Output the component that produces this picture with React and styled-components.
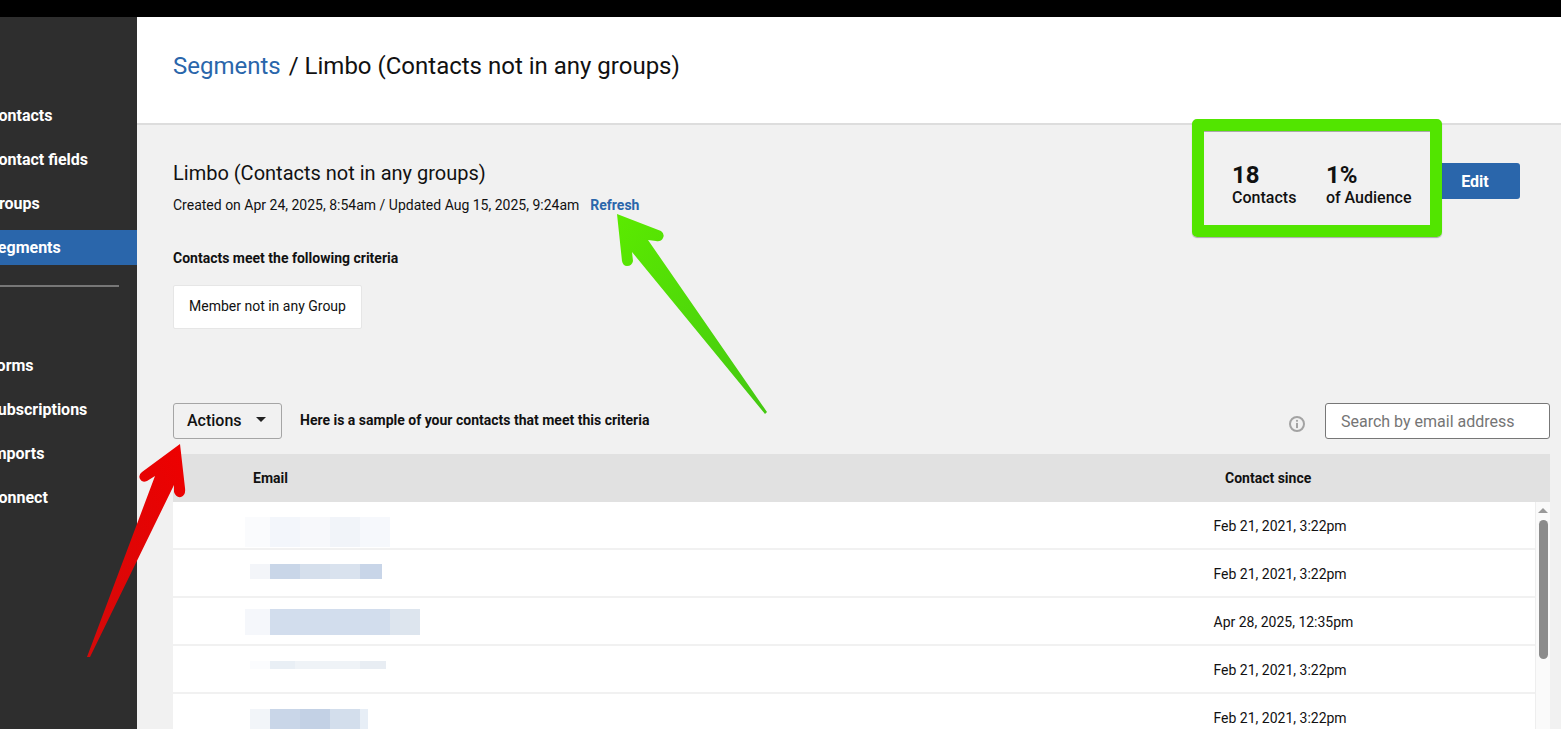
import React from "react";
import styled, { createGlobalStyle } from "styled-components";

const GlobalStyle = createGlobalStyle`
    html, body {
        margin: 0;
        height: 100%;
        overflow: hidden;
        font-family: Roboto, "Liberation Sans", sans-serif;
        color: #111;
    }
    * { box-sizing: border-box; }
`
const Page = styled.div`
    position: relative;
    width: 1561px;
    height: 729px;
    overflow: hidden;
    display: flex;
    flex-direction: column;
    background-color: #000;
    padding-top: 17px;
`
const Shell = styled.div`
    flex: 1;
    display: flex;
    min-height: 0;
`
const Sidebar = styled.nav`
    width: 137px;
    flex-shrink: 0;
    background-color: #2e2e2e;
    overflow: hidden;
    padding-top: 81px;
`
const NavGroup = styled.div`
    display: flex;
    flex-direction: column;
    gap: 9px;
`
const NavItem = styled.div`
    height: 35px;
    display: flex;
    align-items: center;
    font-size: 16px;
    font-weight: 700;
    color: #fff;
    background-color: ${(p) => (p.$active ? "#2a66ab" : "transparent")};
`
const NavLabel = styled.span`
    margin-left: -12px;
    white-space: nowrap;
`
const NavDivider = styled.hr`
    width: 119px;
    height: 2px;
    margin: 20px 0 61px;
    border: 0;
    background-color: #777;
`
const Main = styled.main`
    flex: 1;
    min-width: 0;
    display: flex;
    flex-direction: column;
    background-color: #f1f1f1;
`
const Header = styled.header`
    height: 108px;
    flex-shrink: 0;
    display: flex;
    padding: 33px 36px 0;
    background-color: #fff;
    border-bottom: 2px solid #ddd;
`
const Breadcrumb = styled.h1`
    margin: 0;
    font-size: 24px;
    line-height: 32px;
    font-weight: 400;
`
const CrumbLink = styled.a`
    color: #2a66ab;
    margin-right: 8px;
`
const Content = styled.div`
    flex: 1;
    min-height: 0;
    display: flex;
    flex-direction: column;
    padding: 36px 11px 0 36px;
`
const TopRow = styled.section`
    display: flex;
    justify-content: space-between;
    align-items: flex-start;
    padding-right: 30px;
    height: 242px;
`
const Info = styled.div`
    display: flex;
    flex-direction: column;
    align-items: flex-start;
`
const SegmentName = styled.h2`
    margin: 0;
    font-size: 20px;
    line-height: 24px;
    font-weight: 400;
`
const Meta = styled.p`
    margin: 11px 0 0;
    font-size: 14px;
    line-height: 18px;
`
const Refresh = styled.a`
    margin-left: 11px;
    font-weight: 700;
    color: #2a66ab;
`
const CriteriaTitle = styled.h3`
    margin: 35px 0 0;
    font-size: 14px;
    line-height: 18px;
    font-weight: 700;
`
const CriteriaBox = styled.div`
    margin-top: 18px;
    height: 44px;
    padding: 0 15px 2px;
    display: flex;
    align-items: center;
    font-size: 14px;
    background-color: #fff;
    border: 1px solid #e6e6e6;
    border-radius: 2px;
`
const Summary = styled.div`
    display: flex;
    align-items: flex-start;
`
const Stats = styled.div`
    position: relative;
    display: flex;
    gap: 29.5px;
    padding: 0 30.5px 0 0;
`
const Stat = styled.div`
    display: flex;
    flex-direction: column;
`
const StatValue = styled.span`
    font-size: 24px;
    line-height: 28px;
    font-weight: 700;
`
const StatLabel = styled.span`
    font-size: 16px;
    line-height: 18px;
    font-weight: 500;
`
const Highlight = styled.div`
    position: absolute;
    top: -42px;
    left: -40px;
    width: 250px;
    height: 118px;
    border: 12px solid #52e500;
    border-radius: 5px;
    box-shadow: 0 1px 1px rgba(0, 0, 0, 0.3), inset 0 1px 0 rgba(0, 0, 0, 0.3);
`
const EditButton = styled.button`
    width: 78px;
    height: 36px;
    margin-top: 2px;
    padding: 0 12px 0 0;
    border: 0;
    border-radius: 0 3px 3px 0;
    background-color: #2a66ab;
    color: #fff;
    font-family: inherit;
    font-size: 16px;
    font-weight: 700;
`
const Toolbar = styled.div`
    height: 36px;
    display: flex;
    align-items: center;
    flex-shrink: 0;
`
const ActionsButton = styled.button`
    width: 109px;
    height: 36px;
    display: flex;
    align-items: center;
    gap: 14px;
    padding: 0 0 2px 13px;
    background-color: #f1f1f1;
    border: 1px solid #a5a5a5;
    border-radius: 3px;
    color: #111;
    font-family: inherit;
    font-size: 16px;
    font-weight: 500;
`
const Caret = styled.span`
    width: 0;
    height: 0;
    margin-bottom: 2px;
    border-left: 5px solid transparent;
    border-right: 5px solid transparent;
    border-top: 5px solid #222;
`
const SampleText = styled.span`
    margin: 0 0 2px 18px;
    font-size: 14px;
    font-weight: 700;
`
const InfoIcon = styled.svg`
    margin: 6px 19px 0 auto;
    width: 18px;
    height: 18px;
`
const SearchInput = styled.input`
    width: 225px;
    height: 36px;
    padding: 0 15px;
    background-color: #fff;
    border: 1px solid #777;
    border-radius: 3px;
    font-family: inherit;
    font-size: 16px;
    outline: none;
    &::placeholder { color: #757575; opacity: 1; }
`
const TableHead = styled.div`
    margin-top: 15px;
    height: 48px;
    flex-shrink: 0;
    display: flex;
    align-items: center;
    background-color: #e1e1e1;
    font-size: 14px;
    font-weight: 700;
`
const HeadEmail = styled.span`
    margin-left: 80px;
`
const HeadSince = styled.span`
    margin-left: auto;
    width: 325px;
`
const TableBody = styled.div`
    flex: 1;
    min-height: 0;
    display: flex;
    overflow: hidden;
`
const Rows = styled.div`
    flex: 1;
    min-width: 0;
`
const Row = styled.div`
    height: 48px;
    display: flex;
    align-items: center;
    background-color: #fff;
    border-bottom: 2px solid #f1f1f1;
    font-size: 14px;
`
const EmailCell = styled.div`
    width: 1040.5px;
    align-self: stretch;
    flex-shrink: 0;
    display: flex;
    align-items: flex-start;
    padding-left: ${(p) => p.$inset}px;
`
const Since = styled.span`
    padding-top: 2px;
    white-space: nowrap;
`
const Pixel = styled.span`
    width: ${(p) => p.$w}px;
    height: ${(p) => p.$h}px;
    margin-top: ${(p) => p.$top}px;
    background-color: ${(p) => p.$color};
`
const Scrollbar = styled.div`
    width: 15px;
    flex-shrink: 0;
    display: flex;
    flex-direction: column;
    align-items: center;
    background-color: #fafafa;
    border-left: 1px solid #eee;
`
const ScrollArrow = styled.span`
    width: 0;
    height: 0;
    margin-top: 6px;
    border-left: 5px solid transparent;
    border-right: 5px solid transparent;
    border-bottom: 5px solid #999;
`
const ScrollThumb = styled.span`
    width: 9px;
    height: 139px;
    margin-top: 7px;
    border-radius: 5px;
    background-color: #8c8c8c;
`
const ArrowOverlay = styled.svg`
    position: absolute;
    top: 0;
    left: 0;
    width: 1561px;
    height: 729px;
    pointer-events: none;
`

const upperNav = ["Contacts", "Contact fields", "Groups", "Segments"];
const lowerNav = ["Forms", "Subscriptions", "Imports", "Connect"];

// the addresses are pixelated in the picture, each one is a row of colour blocks
const rows = [
    {
        since: "Feb 21, 2021, 3:22pm", inset: 72, h: 30, top: 15,
        blocks: [[25, "#fafbfd"], [30, "#f3f6fb"], [30, "#f7f8fb"], [30, "#f1f4f9"], [30, "#f6f8fc"]],
    },
    {
        since: "Feb 21, 2021, 3:22pm", inset: 77, h: 15, top: 14,
        blocks: [[20, "#f3f5f9"], [30, "#c9d6e8"], [30, "#d5dfec"], [30, "#d9e2ee"], [22, "#c8d5e8"]],
    },
    {
        since: "Apr 28, 2025, 12:35pm", inset: 72, h: 26, top: 11,
        blocks: [[25, "#f5f7fb"], [120, "#d2dded"], [30, "#dde5ee"]],
    },
    {
        since: "Feb 21, 2021, 3:22pm", inset: 77, h: 8, top: 15,
        blocks: [[20, "#fbfcfe"], [25, "#e9eff5"], [65, "#eff3f7"], [26, "#e8edf3"]],
    },
    {
        since: "Feb 21, 2021, 3:22pm", inset: 77, h: 20, top: 15,
        blocks: [[20, "#f2f5f9"], [30, "#c9d6e8"], [30, "#c3d1e5"], [30, "#d3deec"], [8, "#e7eef6"]],
    },
];

const App = () => {
    return (
        <Page>
            <GlobalStyle />
            <Shell>
                <Sidebar>
                    <NavGroup>
                        {upperNav.map((item) => (
                            <NavItem key={item} $active={item === "Segments"}>
                                <NavLabel>{item}</NavLabel>
                            </NavItem>
                        ))}
                    </NavGroup>
                    <NavDivider />
                    <NavGroup>
                        {lowerNav.map((item) => (
                            <NavItem key={item}>
                                <NavLabel>{item}</NavLabel>
                            </NavItem>
                        ))}
                    </NavGroup>
                </Sidebar>
                <Main>
                    <Header>
                        <Breadcrumb>
                            <CrumbLink>Segments</CrumbLink>/ Limbo (Contacts not in any groups)
                        </Breadcrumb>
                    </Header>
                    <Content>
                        <TopRow>
                            <Info>
                                <SegmentName>Limbo (Contacts not in any groups)</SegmentName>
                                <Meta>
                                    Created on Apr 24, 2025, 8:54am / Updated Aug 15, 2025, 9:24am
                                    <Refresh>Refresh</Refresh>
                                </Meta>
                                <CriteriaTitle>Contacts meet the following criteria</CriteriaTitle>
                                <CriteriaBox>Member not in any Group</CriteriaBox>
                            </Info>
                            <Summary>
                                <Stats>
                                    <Stat>
                                        <StatValue>18</StatValue>
                                        <StatLabel>Contacts</StatLabel>
                                    </Stat>
                                    <Stat>
                                        <StatValue>1%</StatValue>
                                        <StatLabel>of Audience</StatLabel>
                                    </Stat>
                                    <Highlight />
                                </Stats>
                                <EditButton>Edit</EditButton>
                            </Summary>
                        </TopRow>
                        <Toolbar>
                            <ActionsButton>
                                Actions
                                <Caret />
                            </ActionsButton>
                            <SampleText>Here is a sample of your contacts that meet this criteria</SampleText>
                            <InfoIcon viewBox="0 0 18 18">
                                <circle cx="9" cy="9" r="7" fill="none" stroke="#a3a3a3" strokeWidth="2" />
                                <circle cx="9" cy="5.8" r="1.1" fill="#a3a3a3" />
                                <rect x="8" y="7.9" width="2" height="5.2" fill="#a3a3a3" />
                            </InfoIcon>
                            <SearchInput placeholder="Search by email address" />
                        </Toolbar>
                        <TableHead>
                            <HeadEmail>Email</HeadEmail>
                            <HeadSince>Contact since</HeadSince>
                        </TableHead>
                        <TableBody>
                            <Rows>
                                {rows.map((row, i) => (
                                    <Row key={i}>
                                        <EmailCell $inset={row.inset}>
                                            {row.blocks.map(([w, color], j) => (
                                                <Pixel key={j} $w={w} $h={row.h} $top={row.top} $color={color} />
                                            ))}
                                        </EmailCell>
                                        <Since>{row.since}</Since>
                                    </Row>
                                ))}
                            </Rows>
                            <Scrollbar>
                                <ScrollArrow />
                                <ScrollThumb />
                            </Scrollbar>
                        </TableBody>
                    </Content>
                </Main>
            </Shell>
            <ArrowOverlay viewBox="0 0 1561 729">
                <defs>
                    <linearGradient id="greenFill" x1="0" y1="0" x2="1" y2="1">
                        <stop offset="0" stopColor="#5bea00" />
                        <stop offset="1" stopColor="#44c812" />
                    </linearGradient>
                    <linearGradient id="redFill" x1="1" y1="0" x2="0" y2="1">
                        <stop offset="0" stopColor="#ee0000" />
                        <stop offset="1" stopColor="#d40a0a" />
                    </linearGradient>
                </defs>
                <path
                    d="M617 214 L661 231 Q665 234 663 238 Q661 242 656 241 L648 240 L767 412 L765 414 L632 252 L633 261 Q632 266 627 266 Q623 266 622 261 Z"
                    fill="url(#greenFill)"
                />
                <path
                    d="M180 444 L185 488 Q186 495 181 497 Q176 498 174 492 L174 485 L90 657 L87 657 L155 476 L147 481 Q142 483 140 479 Q138 475 142 472 Z"
                    fill="url(#redFill)"
                />
            </ArrowOverlay>
        </Page>
    );
};

export default App;
